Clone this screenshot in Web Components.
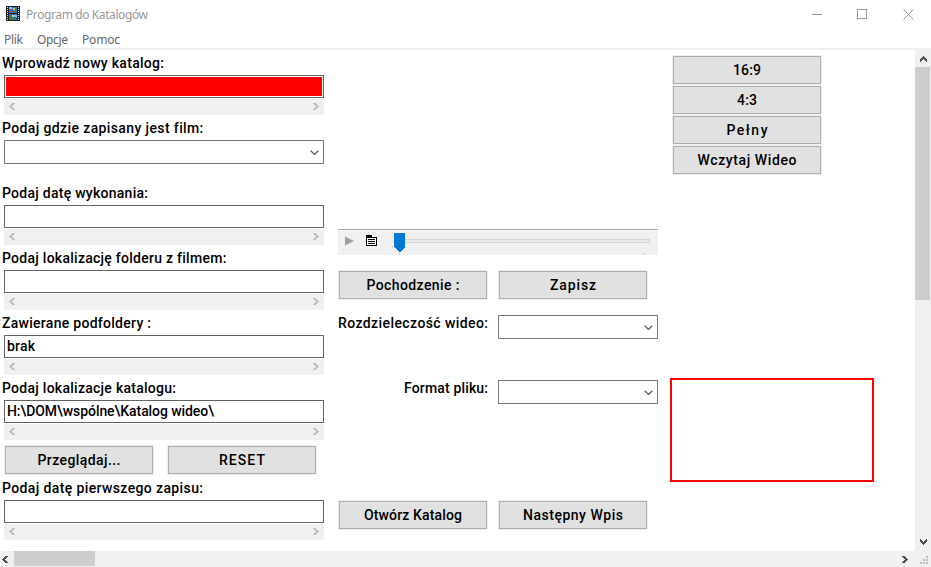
<!DOCTYPE html>
<html lang="pl"><head><meta charset="utf-8"><title>Program do Katalogów</title>
<style>body{margin:0;background:#fff;overflow:hidden}</style></head><body>
<catalog-app></catalog-app>
<script>
const define=(name,html,setup)=>customElements.define(name,class extends HTMLElement{
  connectedCallback(){
    if(this.shadowRoot)return;
    const t=document.createElement('template');t.innerHTML=html;
    this.attachShadow({mode:'open'}).append(t.content.cloneNode(true));
    if(setup)setup(this,this.shadowRoot);
  }
});

// Bitmap-style caption whose tracking is adjusted to occupy the width in "w".
define('fit-text',`<style>:host{display:inline-block;white-space:pre}span{display:inline-block;white-space:pre}</style><span><slot></slot></span>`,(el,r)=>{
  const s=r.querySelector('span'),w=+el.getAttribute('w'),n=el.textContent.length;
  const nat=s.getBoundingClientRect().width;
  s.style.letterSpacing=((w-nat)/(n-1))+'px';
  el.style.width=w+'px';
});

// Chevron used by all scroll bars.
define('scroll-arrow',`<style>:host{display:block;width:7px;height:7px;color:#505050}:host([dim]){color:#bfbfbf}
svg{display:block;fill:currentColor}:host([dir=right]) svg{transform:rotate(180deg)}:host([dir=up]) svg{transform:rotate(90deg)}:host([dir=down]) svg{transform:rotate(-90deg)}</style>
<svg width="7" height="7" shape-rendering="crispEdges"><path d="M3 0h3v1H5v1H4v1H3v1h1v1h1v1h1v1H3V6H2V5H1V4H0V3h1V2h1V1h1z"/></svg>`);

define('mini-scroll',`<style>:host{display:flex;justify-content:space-between;align-items:center;height:16px;box-sizing:border-box;padding:0 5px 1px;background:#f0f0f0}</style>
<scroll-arrow dir="left" dim></scroll-arrow><scroll-arrow dir="right" dim></scroll-arrow>`);

define('field-label',`<style>:host{display:block;height:20px;line-height:17px;padding-left:2px}</style><slot></slot>`);

define('text-field',`<style>:host{display:block;margin-left:4px;width:320px}
.b{height:23px;box-sizing:border-box;border:1px solid #646464;padding:1px 1px 0 2px;line-height:18px;margin-bottom:1px}
:host([red]) .b{padding:1px}:host([red]) .b::before{content:"";display:block;height:19px;background:#f00}</style>
<div class="b"><slot></slot></div><mini-scroll></mini-scroll>`);

define('combo-box',`<style>:host{display:flex;box-sizing:border-box;height:24px;border:1px solid #7a7a7a;background:#fff;justify-content:flex-end;align-items:center;padding:1px 4px 0 0}</style>
<svg width="9" height="6"><path d="M.7.8 4.5 4.5 8.3.8" fill="none" stroke="#555" stroke-width="1.2"/></svg>`);

define('push-button',`<style>:host{display:block;box-sizing:border-box;width:150px;height:30px;border:1px solid #f0f0f0}
div{height:28px;box-sizing:border-box;border:1px solid #adadad;background:#e1e1e1;display:flex;justify-content:center;line-height:26px}</style><div><slot></slot></div>`);

define('media-bar',`<style>:host{display:flex;box-sizing:border-box;height:26px;border-top:1px solid #a0a0a0;background:#f0f0f0;box-shadow:inset 0 1px #fff}svg{display:block}</style>
<svg width="320" height="25" shape-rendering="crispEdges">
<path d="M7 6.500l9 4.500-9 4.500z" fill="#a0a0a0" shape-rendering="auto"/>
<path d="M28 5h6v2h5v9H28z"/><path d="M29 8h9v7h-9z" fill="#fff"/><path d="M30 9h7v1h-7zM30 11h7v1h-7zM30 13h7v1h-7z"/>
<path d="M66.500 9.500h245v3h-245z" fill="#e7eaea" stroke="#d6d6d6"/>
<path d="M56 3h11v14l-5.500 5.500L56 17z" fill="#0078d7"/>
<path d="M61 23h1v2h-1zM306 23h1v2h-1z" fill="#c4c4c4"/></svg>`);

define('title-bar',`<style>:host{display:flex;height:30px;box-sizing:border-box;font:12px "Noto Sans",sans-serif;color:#999;padding-right:17px}
.i{margin:6px 6px 0;display:block}.t{line-height:29px;flex:1}.w{display:flex;gap:35px;padding-top:9px}</style>
<svg class="i" width="14" height="16" shape-rendering="crispEdges"><path fill="#202020" d="M0 0h14v15H0z"/>
<path stroke="#ddd" stroke-width="1" stroke-dasharray="1 1" d="M1.500 1v14M12.500 1v14"/><path fill="#2f72c4" d="M3 1h8v6H3zM3 8h8v6H3z"/><path fill="#8ec3ef" d="M3 1h3v2H3zM8 9h3v2H8z"/><path fill="#e5c62c" d="M7 2h2v2H7zM6 9h2v2H6z"/><path fill="#c83825" d="M4 5h3v1H4z"/><path fill="#3d8135" d="M7 5h3v2H7zM4 11h3v3H4z"/></svg>
<div class="t"><fit-text w="122">Program do Katalogów</fit-text></div>
<svg width="102" height="11" style="margin-top:9px"><path shape-rendering="crispEdges" fill="none" stroke="#999" d="M0 5.500h10M45.500.5h9v9h-9z"/><path d="M91.500.5l10 10M101.500.5l-10 10" stroke="#999"/></svg>`);

define('menu-bar',`<style>:host{display:flex;height:20px;box-sizing:border-box;border-bottom:2px solid #f0f0f0;padding-left:4px;font:12px/20px "Noto Sans",sans-serif;color:#666}
fit-text+fit-text{margin-left:14px}</style><fit-text w="19">Plik</fit-text><fit-text w="31">Opcje</fit-text><fit-text w="38">Pomoc</fit-text>`);

define('v-scroll',`<style>:host{display:flex;flex-direction:column;align-items:center;background:#f0f0f0;box-sizing:border-box;padding:6px 0 6px}
.t{width:15px;height:233px;background:#cdcdcd;margin:4px auto 0 0}.s{flex:1}</style><scroll-arrow dir="up"></scroll-arrow><div class="t"></div><div class="s"></div><scroll-arrow dir="down"></scroll-arrow>`);

define('h-scroll',`<style>:host{display:flex;align-items:center;height:16px;background:#f0f0f0;box-sizing:border-box;padding:0 2px}
.t{width:81px;height:15px;margin:0 auto 1px 5px;background:#cdcdcd}.r{margin-right:12px}.g{align-self:flex-end;margin-bottom:2px}</style>
<scroll-arrow dir="left"></scroll-arrow><div class="t"></div><scroll-arrow class="r" dir="right"></scroll-arrow>
<svg class="g" width="9" height="9" fill="#bfbfbf" shape-rendering="crispEdges"><path d="M6 0h2v2H6zM3 3h2v2H3zM6 3h2v2H6zM0 6h2v2H0zM3 6h2v2H3zM6 6h2v2H6z"/></svg>`);

define('catalog-app',`<style>
:host{display:grid;grid-template-rows:30px 20px 501px 16px;width:931px;height:567px;background:#fff;color:#000;font:500 14px Roboto,sans-serif}
.main{display:grid;grid-template-columns:338px 332px 245px 16px}
.l,.m,.r{padding-top:5px}.l{display:flex;flex-direction:column;gap:5px}
.row{height:60px}.l combo-box{margin-left:4px;width:320px}.bt{display:flex;gap:13px;padding-left:4px}
.m{padding-top:179px}.m media-bar{width:320px}.pair{display:flex;gap:10px}.one{margin-top:15px}
.lab{width:150px;line-height:17px;text-align:right}.pair combo-box{width:160px}.two{margin-top:15px}.three{margin-top:41px}.four{margin-top:96px}
.r push-button{margin-left:2px}.red{box-sizing:border-box;width:204px;height:104px;border:2px solid #f00;margin-top:203px}
</style>
<title-bar></title-bar><menu-bar></menu-bar>
<div class="main"><div class="l">
<div class="row"><field-label><fit-text w="162">Wprowadź nowy katalog:</fit-text></field-label><text-field red></text-field></div>
<div class="row"><field-label><fit-text w="201">Podaj gdzie zapisany jest film:</fit-text></field-label><combo-box></combo-box></div>
<div class="row"><field-label><fit-text w="146">Podaj datę wykonania:</fit-text></field-label><text-field></text-field></div>
<div class="row"><field-label><fit-text w="224">Podaj lokalizację folderu z filmem:</fit-text></field-label><text-field></text-field></div>
<div class="row"><field-label><fit-text w="149">Zawierane podfoldery :</fit-text></field-label><text-field><fit-text w="28">brak</fit-text></text-field></div>
<div class="row"><field-label><fit-text w="174">Podaj lokalizacje katalogu:</fit-text></field-label><text-field><fit-text w="207">H:\\DOM\\wspólne\\Katalog wideo\\</fit-text></text-field></div>
<div class="bt"><push-button><fit-text w="83">Przeglądaj...</fit-text></push-button><push-button><fit-text w="46">RESET</fit-text></push-button></div>
<div class="row"><field-label><fit-text w="201">Podaj datę pierwszego zapisu:</fit-text></field-label><text-field></text-field></div>
</div>
<div class="m"><media-bar></media-bar>
<div class="pair one"><push-button><fit-text w="93">Pochodzenie :</fit-text></push-button><push-button><fit-text w="46">Zapisz</fit-text></push-button></div>
<div class="pair two"><div class="lab"><fit-text w="150">Rozdzieleczość wideo:</fit-text></div><combo-box></combo-box></div>
<div class="pair three"><div class="lab"><fit-text w="84">Format pliku:</fit-text></div><combo-box></combo-box></div>
<div class="pair four"><push-button><fit-text w="98">Otwórz Katalog</fit-text></push-button><push-button><fit-text w="100">Następny Wpis</fit-text></push-button></div>
</div>
<div class="r"><push-button><fit-text w="28">16:9</fit-text></push-button><push-button><fit-text w="20">4:3</fit-text></push-button><push-button><fit-text w="41">Pełny</fit-text></push-button><push-button><fit-text w="99">Wczytaj Wideo</fit-text></push-button><div class="red"></div></div>
<v-scroll></v-scroll></div><h-scroll></h-scroll>`);
</script></body></html>
